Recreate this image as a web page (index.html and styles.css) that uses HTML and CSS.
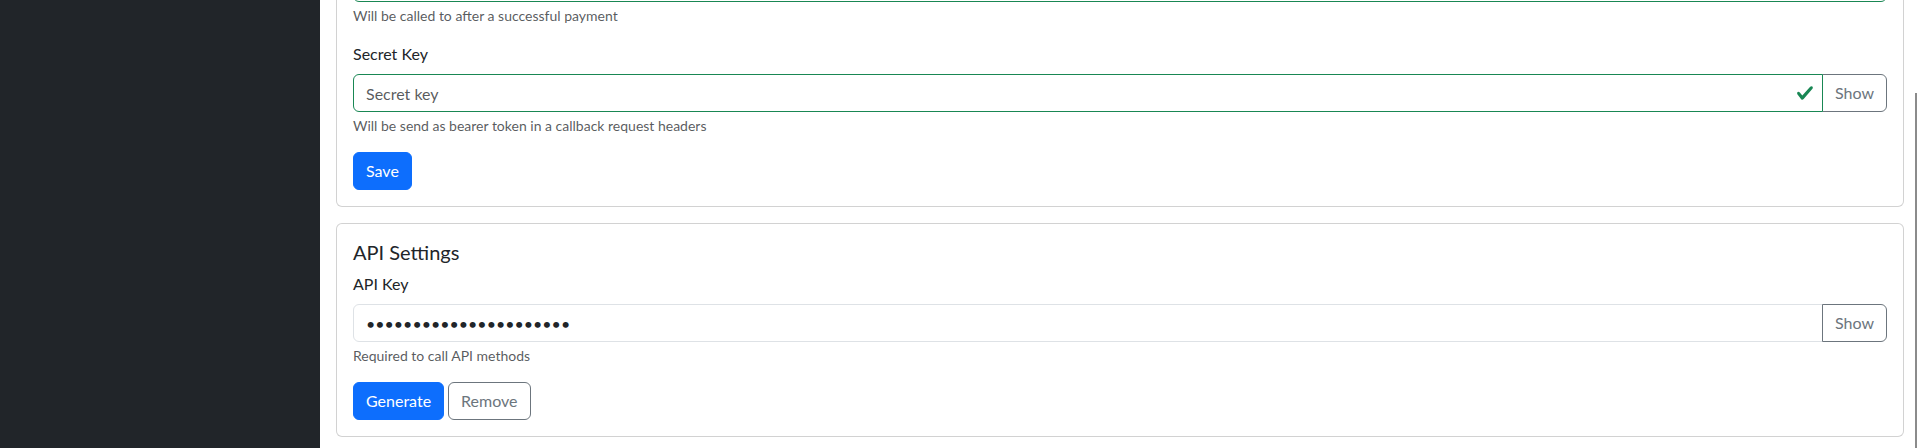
FILE: index.html
```html
<!DOCTYPE html>
<html lang="en">
<head>
<meta charset="utf-8">
<title>Settings</title>
<link rel="stylesheet" href="styles.css">
</head>
<body>
<div class="layout">
  <aside class="sidebar"></aside>
  <main class="main">
    <div class="content">
      <section class="card card-first">
        <div class="card-body">
          <div class="field">
            <div class="input-wrap">
              <input class="form-control is-valid" type="text" aria-label="Callback URL">
            </div>
            <div class="form-text">Will be called to after a successful payment</div>
          </div>
          <div class="field">
            <label class="form-label">Secret Key</label>
            <div class="input-group">
              <div class="input-wrap">
                <input class="form-control is-valid" type="password" placeholder="Secret key">
                <svg class="valid-icon" viewBox="0 0 8 8" width="18" height="18"><path fill="#198754" d="M2.3 6.73.6 4.53c-.4-1.04.46-1.4 1.1-.8l1.1 1.4 3.4-3.8c.6-.63 1.6-.27 1.2.7l-4 4.6c-.43.5-.8.4-1.1.1z"/></svg>
              </div>
              <button class="btn btn-outline btn-append" type="button">Show</button>
            </div>
            <div class="form-text">Will be send as bearer token in a callback request headers</div>
          </div>
          <div class="actions">
            <button class="btn btn-primary" type="button">Save</button>
          </div>
        </div>
      </section>
      <section class="card">
        <div class="card-body">
          <h5 class="card-title">API Settings</h5>
          <div class="field">
            <label class="form-label">API Key</label>
            <div class="input-group">
              <div class="input-wrap">
                <input class="form-control" type="password" value="abcdefghijklmnopqrstuv">
              </div>
              <button class="btn btn-outline btn-append" type="button">Show</button>
            </div>
            <div class="form-text">Required to call API methods</div>
          </div>
          <div class="actions">
            <button class="btn btn-primary" type="button">Generate</button>
            <button class="btn btn-outline" type="button">Remove</button>
          </div>
        </div>
      </section>
    </div>
  </main>
  <div class="scroll-thumb"></div>
</div>
</body>
</html>
```

FILE: styles.css
```css
* { box-sizing: border-box; }
html, body { margin: 0; padding: 0; }
body {
  font-family: "Lato", "Segoe UI", sans-serif;
  font-size: 16px;
  line-height: 1.5;
  color: #212529;
  background: #fff;
  overflow: hidden;
}
.layout {
  position: relative;
  display: flex;
  height: 448px;
  overflow: hidden;
}
.sidebar {
  flex: 0 0 320px;
  background: #212529;
}
.main {
  flex: 1;
  overflow: hidden;
}
.content {
  padding: 0 16px;
  margin-top: -53px;
  display: flex;
  flex-direction: column;
  gap: 16px;
}
.card {
  border: 1px solid rgba(0, 0, 0, 0.175);
  border-radius: 6px;
  background: #fff;
}
.card-body { padding: 16px; }
.card-title {
  margin: 0 0 8px;
  font-size: 20px;
  font-weight: 400;
  line-height: 1.2;
}
.field { margin-bottom: 16px; }
.form-label {
  display: block;
  margin-bottom: 8px;
}
.input-group {
  display: flex;
  align-items: stretch;
}
.input-wrap {
  position: relative;
  flex: 1;
  display: flex;
}
.form-control {
  width: 100%;
  height: 38px;
  padding: 6px 12px;
  font-family: inherit;
  font-size: 16px;
  line-height: 1.5;
  color: #212529;
  background: #fff;
  border: 1px solid #dee2e6;
  border-radius: 6px;
  outline: none;
}
.form-control::placeholder { color: rgba(33, 37, 41, 0.75); }
.form-control.is-valid {
  border-color: #198754;
  padding-right: 36px;
  position: relative;
  z-index: 3;
}
.input-group .form-control {
  border-top-right-radius: 0;
  border-bottom-right-radius: 0;
}
.valid-icon {
  position: absolute;
  right: 9px;
  top: 10px;
  z-index: 4;
}
.form-text {
  margin-top: 4px;
  font-size: 14px;
  line-height: 20px;
  color: rgba(33, 37, 41, 0.75);
}
.actions {
  display: flex;
  gap: 4px;
}
.btn {
  display: inline-block;
  height: 38px;
  padding: 6px 12px;
  font-family: inherit;
  font-size: 16px;
  line-height: 1.5;
  border: 1px solid transparent;
  border-radius: 6px;
  background: transparent;
  cursor: pointer;
}
.btn-primary {
  color: #fff;
  background: #0d6efd;
  border-color: #0d6efd;
}
.btn-outline {
  color: #6c757d;
  border-color: #6c757d;
  background: #fff;
}
.btn-append {
  margin-left: -1px;
  position: relative;
  z-index: 2;
  border-top-left-radius: 0;
  border-bottom-left-radius: 0;
}
.scroll-thumb {
  position: absolute;
  left: 1915px;
  top: 93px;
  width: 2px;
  bottom: 0;
  background: #8b8b8b;
}
```
